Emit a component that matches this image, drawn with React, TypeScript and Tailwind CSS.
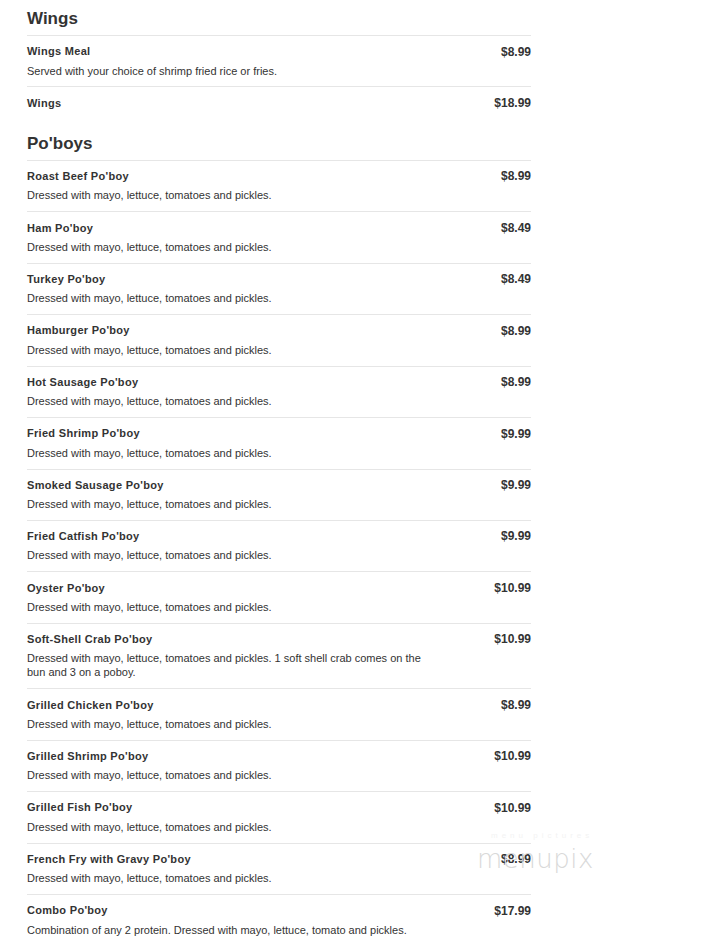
const wings = [
	{ name: "Wings Meal", price: "$8.99", desc: "Served with your choice of shrimp fried rice or fries." },
	{ name: "Wings", price: "$18.99", desc: "" },
];

const dressed = "Dressed with mayo, lettuce, tomatoes and pickles.";

const poboys = [
	{ name: "Roast Beef Po'boy", price: "$8.99", desc: dressed },
	{ name: "Ham Po'boy", price: "$8.49", desc: dressed },
	{ name: "Turkey Po'boy", price: "$8.49", desc: dressed },
	{ name: "Hamburger Po'boy", price: "$8.99", desc: dressed },
	{ name: "Hot Sausage Po'boy", price: "$8.99", desc: dressed },
	{ name: "Fried Shrimp Po'boy", price: "$9.99", desc: dressed },
	{ name: "Smoked Sausage Po'boy", price: "$9.99", desc: dressed },
	{ name: "Fried Catfish Po'boy", price: "$9.99", desc: dressed },
	{ name: "Oyster Po'boy", price: "$10.99", desc: dressed },
	{
		name: "Soft-Shell Crab Po'boy",
		price: "$10.99",
		desc: "Dressed with mayo, lettuce, tomatoes and pickles. 1 soft shell crab comes on the bun and 3 on a poboy.",
	},
	{ name: "Grilled Chicken Po'boy", price: "$8.99", desc: dressed },
	{ name: "Grilled Shrimp Po'boy", price: "$10.99", desc: dressed },
	{ name: "Grilled Fish Po'boy", price: "$10.99", desc: dressed },
	{ name: "French Fry with Gravy Po'boy", price: "$8.99", desc: dressed },
	{
		name: "Combo Po'boy",
		price: "$17.99",
		desc: "Combination of any 2 protein. Dressed with mayo, lettuce, tomato and pickles.",
	},
];

type Item = { name: string; price: string; desc: string };

const MenuItem = ({ item }: { item: Item }) => (
	<div className="border-t border-[#e6e6e6] pt-[7.5px] pb-[8.95px]">
		<div className="flex justify-between items-center h-[16px]">
			<span className="text-[11px] font-bold tracking-[0.3px]">{item.name}</span>
			<span className="text-[12px] font-bold">{item.price}</span>
		</div>
		{item.desc && (
			<p className="mt-[4px] w-[400px] text-[11px] leading-[14px]">{item.desc}</p>
		)}
	</div>
);

const Section = ({ title, items, first }: { title: string; items: Item[]; first?: boolean }) => (
	<div className={first ? "" : "mt-[14px]"}>
		<h2 className="text-[17px] font-bold leading-[20px] pb-[6px]">{title}</h2>
		{items.map((item) => (
			<MenuItem key={item.name} item={item} />
		))}
	</div>
);

export default function App() {
	return (
		<div
			className="relative w-[710px] h-[945px] overflow-hidden bg-white text-[#333]"
			style={{ fontFamily: '"Liberation Sans", Arial, sans-serif' }}
		>
			<div className="w-[504px] ml-[27px] pt-[9px]">
				<Section title="Wings" items={wings} first />
				<Section title="Po'boys" items={poboys} />
			</div>
			{/* watermark */}
			<div className="absolute left-[477px] top-[830px] pointer-events-none select-none">
				<div className="text-[8px] tracking-[4px] text-[#f3f3f3] pl-[14px]">menu pictures</div>
				<div
					className="text-[26px] leading-[34px] text-[#d9d9d9] tracking-[0.5px]"
					style={{ fontFamily: '"DejaVu Sans", sans-serif', fontWeight: 200 }}
				>
					menupix
				</div>
			</div>
		</div>
	);
}
